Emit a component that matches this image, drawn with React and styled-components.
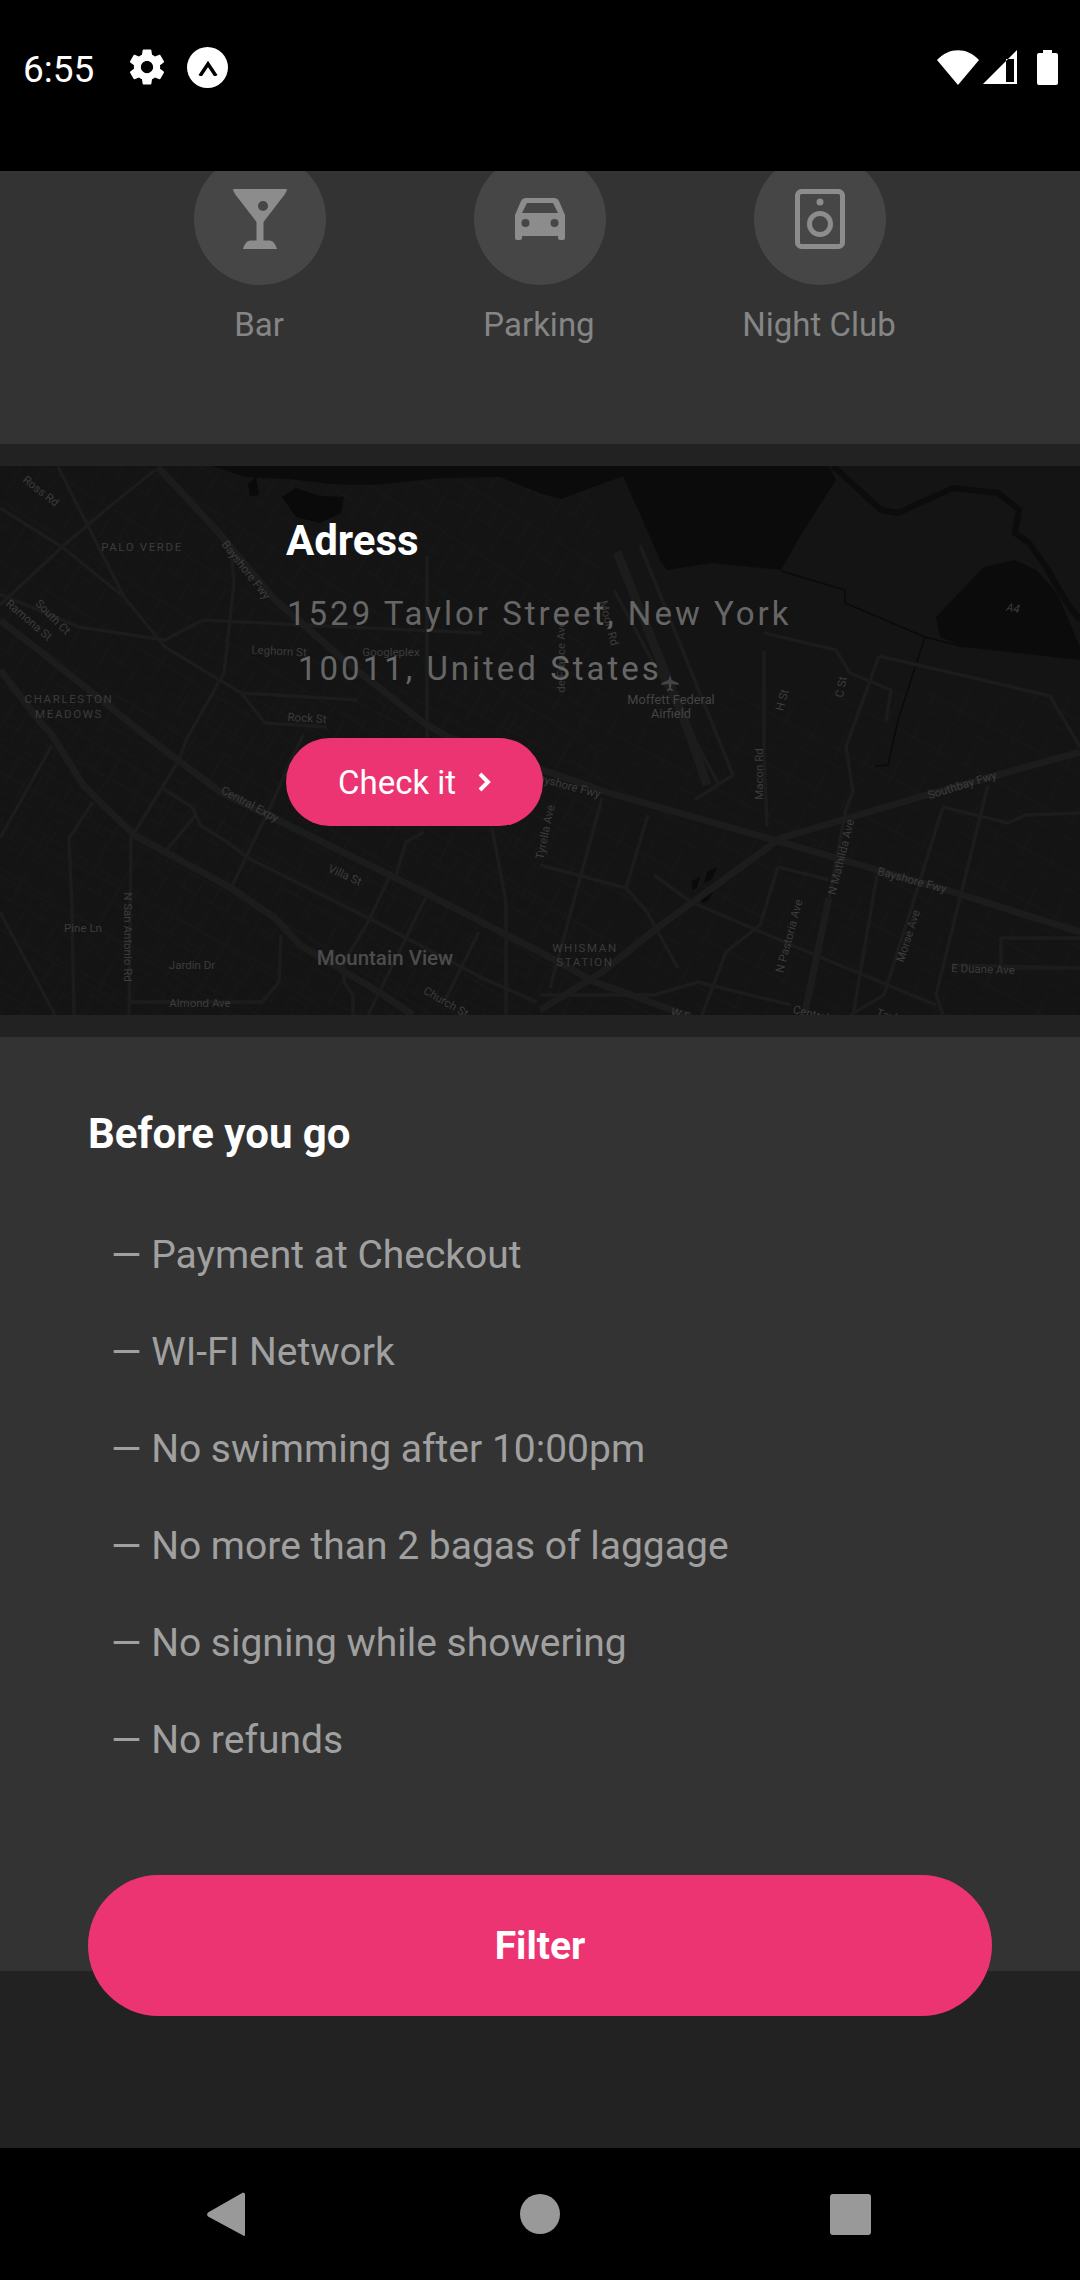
import styled, { createGlobalStyle } from 'styled-components'

const GlobalStyle = createGlobalStyle`
  html, body {
    margin: 0;
    padding: 0;
    background: #000;
    font-family: Roboto, "Liberation Sans", sans-serif;
  }
  * { box-sizing: border-box; }
`

const majorRoads = [
  'M158 467 L220 534 L275 600 L344 660 L424 723 L448 737 L609 793 L767 838 L850 862 L953 892 L1080 932',
  'M1080 752 L926 795 L781 838 L657 928 L602 972 L540 1010',
  'M0 620 L55 663 L145 735 L220 792 L396 878 L540 952 L595 982 L678 1012 L720 1030',
  'M0 670 L41 723 L52 735 L83 785 L134 835 L231 888 L275 918 L300 945 L379 992 L413 1015',
  'M829 898 L805 1012',
]

const mediumRoads = [
  'M231 550 L234 583 L224 673 L186 740 L179 760 L131 838 L129 1020',
  'M58 467 L124 597 L165 647 L241 693 L358 700',
  'M203 620 L165 640 L79 627 L0 594',
  'M203 620 L344 627 L482 633',
  'M241 693 L265 723 L327 727',
  'M427 556 L427 747',
  'M155 470 L110 506 L62 547 L0 605',
  'M0 508 L62 547 L124 597',
  'M764 633 L836 650 L850 673 L891 690 L886 721',
  'M879 656 L974 678 L1050 696 L1080 747',
  'M879 656 L846 747 L853 792 L846 809 L829 898',
  'M764 651 L764 750 L767 827',
  'M540 865 L626 888 L647 912 L678 968',
  'M602 798 L550 988',
  'M648 815 L626 888',
  'M540 995 L654 995 L698 982 L791 1005',
  'M654 875 L691 902 L815 955 L936 1005',
  'M778 867 L829 880',
  'M778 867 L760 925 L726 952 L702 1015',
  'M943 807 L1008 823 L1026 815 L1080 813',
  'M943 807 L884 995 L850 1015',
  'M988 785 L936 995 L943 1015',
  'M1080 938 L1001 938 L1001 968 L1080 968',
  'M953 965 L1080 968',
  'M877 875 L853 1015',
  'M0 912 L55 1015',
  'M0 838 L52 745',
  'M69 838 L93 802',
  'M69 838 L72 908 L74 1015',
  'M131 1002 L262 1002 L279 982 L281 935',
  'M162 788 L193 808 L200 825 L227 842 L248 858 L368 918 L406 938 L482 978 L537 1002',
  'M165 852 L196 815',
  'M231 888 L265 818 L303 735',
  'M389 878 L368 922 L344 962 L344 982 L353 995 L353 1015',
  'M492 828 L506 902 L506 1015',
  'M424 832 L406 842 L396 875',
  'M479 932 L444 1002',
  'M427 895 L368 1015',
  'M640 545 L733 775 L695 800',
  'M614 590 L719 785',
]

const labels = [
  { t: 'Ross Rd', x: 41, y: 491, r: 38 },
  { t: 'PALO VERDE', x: 142, y: 547, s: 1.6 },
  { t: 'Bayshore Fwy', x: 246, y: 570, r: 52 },
  { t: 'South Ct', x: 53, y: 617, r: 45 },
  { t: 'Ramona St', x: 29, y: 620, r: 40 },
  { t: 'Leghorn St', x: 279, y: 651, r: 3 },
  { t: 'Googleplex', x: 391, y: 652 },
  { t: 'CHARLESTON', x: 69, y: 699, s: 1.6 },
  { t: 'MEADOWS', x: 69, y: 714, s: 1.6 },
  { t: 'Rock St', x: 307, y: 718, r: 4 },
  { t: 'Moffett Federal', x: 671, y: 699, c: '#444', z: 12.8 },
  { t: 'Airfield', x: 671, y: 713, c: '#444', z: 12.8 },
  { t: 'Moon Rd', x: 609, y: 623, r: 75 },
  { t: 'de France Ave', x: 561, y: 657, r: -90 },
  { t: 'H St', x: 782, y: 700, r: -75 },
  { t: 'C St', x: 841, y: 687, r: -80 },
  { t: 'Central Expy', x: 250, y: 804, r: 28 },
  { t: 'Villa St', x: 345, y: 875, r: 24 },
  { t: 'Pine Ln', x: 83, y: 928 },
  { t: 'N San Antonio Rd', x: 128, y: 937, r: 90 },
  { t: 'Jardin Dr', x: 192, y: 965 },
  { t: 'Almond Ave', x: 200, y: 1003 },
  { t: 'Church St', x: 446, y: 1002, r: 30 },
  { t: 'Bayshore Fwy', x: 566, y: 785, r: 15 },
  { t: 'Tyrella Ave', x: 545, y: 832, r: -78 },
  { t: 'Macon Rd', x: 759, y: 774, r: -90 },
  { t: 'Southbay Fwy', x: 962, y: 785, r: -17 },
  { t: 'N Mathilda Ave', x: 841, y: 857, r: -76 },
  { t: 'Bayshore Fwy', x: 912, y: 880, r: 15 },
  { t: 'N Pastoria Ave', x: 789, y: 936, r: -75 },
  { t: 'Morse Ave', x: 908, y: 936, r: -72 },
  { t: 'E Duane Ave', x: 983, y: 969, r: 2 },
  { t: 'WHISMAN', x: 585, y: 948, s: 1.6 },
  { t: 'STATION', x: 585, y: 962, s: 1.6 },
  { t: 'W Evelyn', x: 693, y: 1018, r: 17 },
  { t: 'Central Expy', x: 824, y: 1017, r: 15 },
  { t: 'Taylor Ave', x: 902, y: 1020, r: 17 },
]

const rules = [
  'Payment at Checkout',
  'WI-FI Network',
  'No swimming after 10:00pm',
  'No more than 2 bagas of laggage',
  'No signing while showering',
  'No refunds',
]

const MartiniIcon = () => (
  <svg width='54' height='60' viewBox='0 0 54 60'>
    <path
      fillRule='evenodd'
      fill='currentColor'
      d='M0 1 a1 1 0 0 1 1-1 H53 a1 1 0 0 1 1 1 L52 5 L30.5 33 V51.5 H37 C41 52 43 57 44 60 H10 C11 57 13 52 17 51.5 H23.5 V33 L2 5 Z M35 17 a5 5 0 1 0 -10 0 a5 5 0 1 0 10 0 Z'
    />
  </svg>
)

const CarIcon = () => (
  <svg width='50' height='42' viewBox='0 0 50 42'>
    <path
      fillRule='evenodd'
      fill='currentColor'
      d='M11 0 H39 C41 0 43 1 44 3 L50 17 V40 a2 2 0 0 1-2 2 H45 a2 2 0 0 1-2-2 V38 H7 V40 a2 2 0 0 1-2 2 H2 a2 2 0 0 1-2-2 V17 L6 3 C7 1 9 0 11 0 Z M12 5 L7 15 H43 L38 5 Z M14.5 25 a4 4 0 1 0 -8 0 a4 4 0 1 0 8 0 Z M43.5 25 a4 4 0 1 0 -8 0 a4 4 0 1 0 8 0 Z'
    />
  </svg>
)

const SpeakerIcon = () => (
  <svg width='50' height='60' viewBox='0 0 50 60'>
    <rect x='2.5' y='2.5' width='45' height='55' rx='4' fill='none' stroke='currentColor' strokeWidth='5' />
    <circle cx='25' cy='13' r='3.5' fill='currentColor' />
    <circle cx='25' cy='35' r='10.5' fill='none' stroke='currentColor' strokeWidth='5' />
  </svg>
)

const amenities = [
  { name: 'Bar', icon: <MartiniIcon /> },
  { name: 'Parking', icon: <CarIcon /> },
  { name: 'Night Club', icon: <SpeakerIcon /> },
]

const App = () => {
  return (
    <Screen>
      <GlobalStyle />
      <StatusBar>
        <StatusLeft>
          <Time>6:55</Time>
          <svg width='42' height='42' viewBox='0 0 24 24' fill='#fff'>
            <path d='M19.43 12.98c.04-.32.07-.64.07-.98s-.03-.66-.07-.98l2.11-1.65c.19-.15.24-.42.12-.64l-2-3.46c-.12-.22-.39-.3-.61-.22l-2.49 1c-.52-.4-1.08-.73-1.69-.98l-.38-2.65C14.46 2.18 14.25 2 14 2h-4c-.25 0-.46.18-.49.42l-.38 2.65c-.61.25-1.17.59-1.69.98l-2.49-1c-.23-.09-.49 0-.61.22l-2 3.46c-.13.22-.07.49.12.64l2.11 1.65c-.04.32-.07.65-.07.98s.03.66.07.98l-2.11 1.65c-.19.15-.24.42-.12.64l2 3.46c.12.22.39.3.61.22l2.49-1c.52.4 1.08.73 1.69.98l.38 2.65c.03.24.24.42.49.42h4c.25 0 .46-.18.49-.42l.38-2.65c.61-.25 1.17-.59 1.69-.98l2.49 1c.23.09.49 0 .61-.22l2-3.46c.12-.22.07-.49-.12-.64l-2.11-1.65zM12 15.5c-1.93 0-3.5-1.57-3.5-3.5s1.57-3.5 3.5-3.5 3.5 1.57 3.5 3.5-1.57 3.5-3.5 3.5z' />
          </svg>
          <AppBadge>
            <svg width='20' height='18' viewBox='0 0 20 18'>
              <path d='M2 18 L10 6 L18 18' fill='none' stroke='#000' strokeWidth='3.5' />
            </svg>
          </AppBadge>
        </StatusLeft>
        <StatusRight>
          <svg width='42' height='35' viewBox='0 0 42 35'>
            <path d='M0 10 C12 -3 30 -3 42 10 L21 35 Z' fill='#fff' />
          </svg>
          <svg width='34' height='34' viewBox='0 0 34 34'>
            <path fillRule='evenodd' d='M34 0 V34 H0 Z M31 9 H23 V32 H31 Z' fill='#fff' />
          </svg>
          <svg width='21' height='35' viewBox='0 0 21 35'>
            <path d='M6 0 H15 V3 H19 a2 2 0 0 1 2 2 V33 a2 2 0 0 1-2 2 H2 a2 2 0 0 1-2-2 V5 a2 2 0 0 1 2-2 H6 Z' fill='#fff' />
          </svg>
        </StatusRight>
      </StatusBar>

      <AmenitiesPanel>
        {amenities.map((item) => (
          <Amenity key={item.name}>
            <IconCircle>{item.icon}</IconCircle>
            <AmenityName>{item.name}</AmenityName>
          </Amenity>
        ))}
      </AmenitiesPanel>

      <MapSection>
        <MapDrawing viewBox='0 466 1080 549' preserveAspectRatio='none'>
          <defs>
            <pattern id='streetsA' width='34' height='52' patternUnits='userSpaceOnUse' patternTransform='rotate(32)'>
              <path d='M0 8 H34 M0 30 H22 M12 0 V30 M28 14 V52' stroke='#181818' strokeWidth='1' fill='none' />
            </pattern>
            <pattern id='streetsB' width='46' height='30' patternUnits='userSpaceOnUse' patternTransform='rotate(-62)'>
              <path d='M0 12 H30 M8 0 V30 M38 6 V24' stroke='#181818' strokeWidth='1' fill='none' />
            </pattern>
          </defs>
          <rect x='0' y='466' width='1080' height='549' fill='#141414' />
          <rect x='0' y='466' width='600' height='549' fill='url(#streetsA)' />
          <rect x='0' y='690' width='1080' height='325' fill='url(#streetsB)' />
          <path
            d='M212 466 L245 477 L290 479 L330 484 L374 485 L440 478 L500 477 L540 493 L561 499 L623 476 L647 530 L660 560 L667 570 L712 563 L781 570 L802 533 L836 480 L829 466 Z'
            fill='#0b0b0b'
          />
          <path d='M936 617 L984 567 L1015 560 L1036 570 L1057 593 L1080 647 L1080 660 L964 647 L940 637 Z' fill='#0b0b0b' />
          <path d='M282 497 L296 488 L320 496 L344 497 L341 513 L320 523 L296 517 Z' fill='#0a0a0a' />
          <path d='M248 484 L256 477 L259 495 L250 496 Z' fill='#0a0a0a' />
          <path d='M692 881 L700 877 L697 888 L692 890 Z M707 872 L717 867 L712 879 L704 883 Z M700 898 L713 892 L708 901 L702 903 Z' fill='#0a0a0a' />
          <path
            d='M833 466 L881 510 L898 513 L953 488 L998 493 L1019 510 L1015 533 L1029 543 L1046 567 L1067 603 L1080 620'
            fill='none'
            stroke='#0c0c0c'
            strokeWidth='6'
          />
          <path
            d='M781 571 L845 590 L845 603 L925 637 L964 647 M925 637 L898 720 L888 765 L875 766'
            fill='none'
            stroke='#0a0a0a'
            strokeWidth='1.5'
          />
          <g fill='none' stroke='#1c1c1c' strokeLinejoin='round'>
            {mediumRoads.map((d) => (
              <path key={d} d={d} strokeWidth='3.5' />
            ))}
            {majorRoads.map((d) => (
              <path key={d} d={d} strokeWidth='7' />
            ))}
            <path d='M617 552 L690 735 L707 785' strokeWidth='9' />
          </g>
          <path
            d='M670 675 l1.5 5 l7 3 v2 l-7 -1 l-.5 4 l2 2 v1 l-3 -.8 l-3 .8 v-1 l2 -2 l-.5 -4 l-7 1 v-2 l7 -3 Z'
            fill='#444'
          />
          <MapText x='1013' y='608' transform='rotate(10 1013 608)' fontStyle='italic'>
            A4
          </MapText>
          {labels.map((l) => (
            <MapText
              key={l.t + l.x}
              x={l.x}
              y={l.y}
              $color={l.c}
              $size={l.z}
              letterSpacing={l.s}
              transform={l.r ? `rotate(${l.r} ${l.x} ${l.y})` : undefined}
            >
              {l.t}
            </MapText>
          ))}
          <CityText x='385' y='958'>
            Mountain View
          </CityText>
        </MapDrawing>
        <AddressBlock>
          <AddressTitle>Adress</AddressTitle>
          <AddressLine>1529 Taylor Street, New York</AddressLine>
          <AddressLine $indent>10011, United States</AddressLine>
          <CheckButton>
            Check it
            <svg width='14' height='20' viewBox='0 0 14 20'>
              <path d='M3 2 L11 10 L3 18' fill='none' stroke='#fff' strokeWidth='4' />
            </svg>
          </CheckButton>
        </AddressBlock>
      </MapSection>

      <RulesPanel>
        <RulesTitle>Before you go</RulesTitle>
        <RulesList>
          {rules.map((rule) => (
            <Rule key={rule}>— {rule}</Rule>
          ))}
        </RulesList>
        <FilterButton>Filter</FilterButton>
      </RulesPanel>

      <BottomSpace />

      <NavBar>
        <svg width='38' height='45' viewBox='0 0 38 45'>
          <path d='M37 1 a1 1 0 0 1 1 1 V43 a1 1 0 0 1-1.8 .6 L1 24.5 a3 3 0 0 1 0-4 L36 .5 Z' fill='#999' />
        </svg>
        <NavDot />
        <NavSquare />
      </NavBar>
    </Screen>
  )
}

const Screen = styled.div`
  width: 1080px;
  height: 2280px;
  display: flex;
  flex-direction: column;
  overflow: hidden;
  background: #222;
`

const StatusBar = styled.div`
  height: 171px;
  flex: none;
  background: #000;
  padding: 46px 22px 0 23px;
  display: flex;
  justify-content: space-between;
  align-items: flex-start;
`

const StatusLeft = styled.div`
  display: flex;
  align-items: center;
  height: 42px;
  gap: 10px;
`

const Time = styled.span`
  color: #fff;
  font-size: 37px;
  line-height: 36px;
  width: 92.5px;
  margin-top: 6px;
`

const AppBadge = styled.div`
  width: 41px;
  height: 41px;
  margin-left: 9.5px;
  border-radius: 50%;
  background: #fff;
  display: flex;
  align-items: center;
  justify-content: center;
`

const StatusRight = styled.div`
  display: flex;
  align-items: flex-start;
  gap: 4px;
  margin-top: 4px;

  svg:last-child {
    margin-left: 16px;
  }
`

const AmenitiesPanel = styled.div`
  height: 273px;
  flex: none;
  background: #333;
  overflow: hidden;
  display: flex;
  justify-content: center;
  align-items: flex-start;
`

const Amenity = styled.div`
  width: 280px;
  margin-top: -18px;
  display: flex;
  flex-direction: column;
  align-items: center;
`

const IconCircle = styled.div`
  width: 132px;
  height: 132px;
  border-radius: 50%;
  background: #464646;
  color: #8c8c8c;
  display: flex;
  align-items: center;
  justify-content: center;
`

const AmenityName = styled.span`
  margin-top: 20px;
  margin-right: 2px;
  color: #858585;
  font-size: 33px;
  line-height: 40px;
`

const MapSection = styled.div`
  position: relative;
  height: 549px;
  flex: none;
  margin-top: 22px;
  overflow: hidden;
`

const MapDrawing = styled.svg`
  position: absolute;
  inset: 0;
  width: 100%;
  height: 100%;
`

const MapText = styled.text`
  font-family: Roboto, sans-serif;
  font-size: ${(props) => props.$size || 11.5}px;
  fill: ${(props) => props.$color || '#3c3c3c'};
  text-anchor: middle;
  dominant-baseline: central;
`

const CityText = styled.text`
  font-family: Roboto, sans-serif;
  font-size: 20.5px;
  font-weight: 500;
  fill: #4c4c4c;
  text-anchor: middle;
  dominant-baseline: central;
`

const AddressBlock = styled.div`
  position: relative;
  padding: 50px 0 0 286px;
  display: flex;
  flex-direction: column;
  align-items: flex-start;
`

const AddressTitle = styled.div`
  color: #fff;
  font-size: 42px;
  font-weight: 700;
  line-height: 50px;
  margin-bottom: 20px;
`

const AddressLine = styled.div`
  color: #666;
  font-size: 33px;
  line-height: 55px;
  letter-spacing: 3px;
  padding-left: ${(props) => (props.$indent ? '12px' : '1px')};
`

const CheckButton = styled.div`
  width: 257px;
  height: 88px;
  margin-top: 42px;
  border-radius: 44px;
  background: #ec3472;
  color: #fff;
  font-size: 33px;
  display: flex;
  align-items: center;
  padding-left: 52px;
  gap: 21px;
`

const RulesPanel = styled.div`
  height: 934px;
  flex: none;
  margin-top: 22px;
  background: #333;
  padding: 72px 88px 0;
  display: flex;
  flex-direction: column;
  position: relative;
  z-index: 1;
`

const RulesTitle = styled.div`
  color: #fff;
  font-size: 42px;
  font-weight: 700;
  line-height: 50px;
`

const RulesList = styled.div`
  margin-top: 48px;
  padding-left: 23px;
  display: flex;
  flex-direction: column;
`

const Rule = styled.div`
  color: #a0a0a0;
  font-size: 39px;
  line-height: 97px;
`

const FilterButton = styled.div`
  height: 141px;
  flex: none;
  margin-top: 86px;
  border-radius: 71px;
  background: #ec3472;
  color: #fff;
  font-size: 39px;
  font-weight: 700;
  display: flex;
  align-items: center;
  justify-content: center;
`

const BottomSpace = styled.div`
  flex: 1;
  background: #222;
`

const NavBar = styled.div`
  height: 132px;
  flex: none;
  background: #000;
  padding: 44px 209px 0 207px;
  display: flex;
  justify-content: space-between;
  align-items: flex-start;
`

const NavDot = styled.div`
  width: 40px;
  height: 40px;
  margin-top: 2px;
  margin-left: 5px;
  border-radius: 50%;
  background: #999;
`

const NavSquare = styled.div`
  width: 41px;
  height: 41px;
  margin-top: 2px;
  border-radius: 3px;
  background: #999;
`

export default App
